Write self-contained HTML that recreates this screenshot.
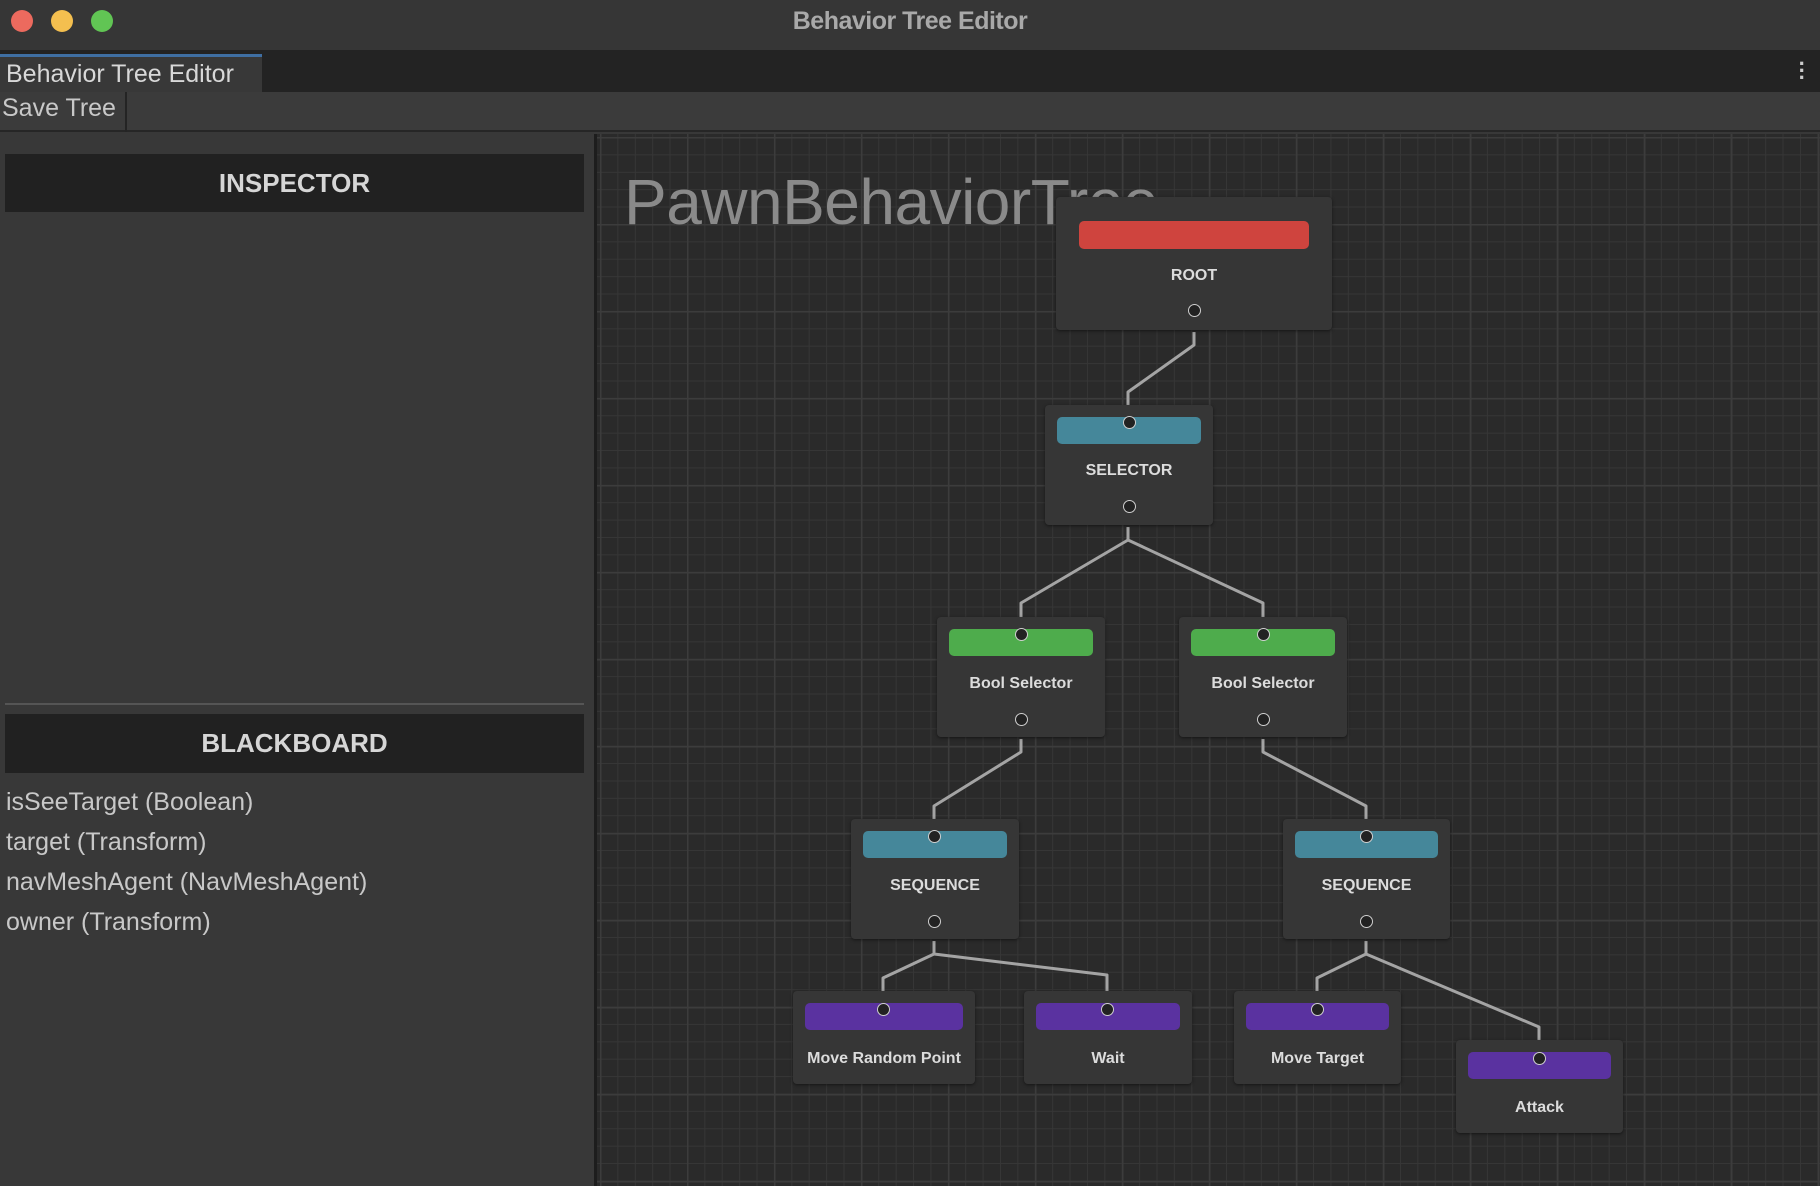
<!DOCTYPE html>
<html><head><meta charset="utf-8"><style>
*{margin:0;padding:0;box-sizing:border-box}
body{width:1820px;height:1186px;background:#383838;position:relative;overflow:hidden;font-family:"Liberation Sans",sans-serif}
.a{position:absolute}
#title{left:0;top:0;width:1820px;height:50px;background:#363636;}
#title .t{left:0;width:1820px;top:7px;text-align:center;color:#a9a9a9;font-weight:bold;font-size:25px;letter-spacing:-0.5px}
.dot{width:22px;height:22px;border-radius:50%;top:10px}
#tabs{left:0;top:50px;width:1820px;height:42px;background:#232323}
#tab{left:0;top:54px;width:262px;height:38px;background:#383838;border-top:3px solid #3f6fa3;color:#d8d8d8;font-size:25px;padding:3px 0 0 6px}
#tool{left:0;top:92px;width:1820px;height:40px;background:#3b3b3b;border-bottom:2px solid #262626}
#save{left:0;top:92px;width:127px;height:40px;border-right:2px solid #242424;color:#c8c8c8;font-size:25px;padding:2px 0 0 2px}
#left{left:0;top:134px;width:594px;height:1052px;background:#383838}
.hdr{left:5px;width:579px;background:#212121;color:#d6d6d6;font-weight:bold;font-size:26px;text-align:center}
.item{left:6px;color:#c8c8c8;font-size:25px}
#graph{left:597px;top:134px;width:1223px;height:1052px;background-color:#2a2a2a;
background-image:linear-gradient(#3c3c3c 1.5px,transparent 1.5px),linear-gradient(90deg,#3c3c3c 1.5px,transparent 1.5px),linear-gradient(#363636 1px,transparent 1px),linear-gradient(90deg,#363636 1px,transparent 1px);
background-size:87px 87px,87px 87px,17.4px 17.4px,17.4px 17.4px;background-position:3px 3px,3px 3px,3px 3px,3px 3px}
#split{left:594px;top:134px;width:3px;height:1052px;background:#1d1d1d}
.node{position:absolute;background:#363636;border-radius:4px;box-shadow:0 1px 3px rgba(0,0,0,.5)}
.bar{position:absolute;left:12px;right:12px;top:12px;height:27px;border-radius:5px}
.lbl{position:absolute;left:0;right:0;text-align:center;color:#dcdcdc;font-weight:bold;font-size:16px}
.c{position:absolute;width:13px;height:13px;border-radius:50%;background:#222;border:1.5px solid #cfcfcf;margin-left:-6.5px}
</style></head><body>
<div id="title" class="a"><div class="a dot" style="left:11px;background:#ec6a5e"></div><div class="a dot" style="left:51px;background:#f4bf4f"></div><div class="a dot" style="left:91px;background:#61c554"></div><div class="a t">Behavior Tree Editor</div></div>
<div id="tabs" class="a"><div class="a" style="right:14px;top:10px;color:#ccc;font-size:22px;line-height:7px;font-weight:bold">·<br>·<br>·</div></div>
<div id="tab" class="a">Behavior Tree Editor</div>
<div id="tool" class="a"></div>
<div id="save" class="a">Save Tree</div>
<div id="left" class="a"></div>
<div class="a hdr" style="top:154px;height:58px;line-height:58px">INSPECTOR</div>
<div class="a" style="left:5px;top:703px;width:579px;height:2px;background:#555"></div>
<div class="a hdr" style="top:714px;height:59px;line-height:59px">BLACKBOARD</div>
<div class="a item" style="top:788px">isSeeTarget (Boolean)</div>
<div class="a item" style="top:828px">target (Transform)</div>
<div class="a item" style="top:868px">navMeshAgent (NavMeshAgent)</div>
<div class="a item" style="top:908px">owner (Transform)</div>
<div id="graph" class="a"></div>
<div id="split" class="a"></div>
<div class="a" style="left:624px;top:165px;color:#8a8a8a;font-size:64px;letter-spacing:-0.5px">PawnBehaviorTree</div>
<svg class="a" style="left:0;top:0" width="1820" height="1186"><g fill="none" stroke="#a4a4a4" stroke-width="3" stroke-linejoin="round">
<path d="M1194 332V345L1128 392V405"/>
<path d="M1128 527V540L1021 603V617"/>
<path d="M1128 527V540L1263 603V617"/>
<path d="M1021 739V752L934 806V819"/>
<path d="M1263 739V752L1366 806V819"/>
<path d="M934 941V954L883 978V991"/>
<path d="M934 941V954L1107 975V991"/>
<path d="M1366 941V954L1317 978V991"/>
<path d="M1366 941V954L1539 1027V1040"/>
</g></svg>
<div class="node" style="left:1056px;top:197px;width:276px;height:133px"><div class="bar" style="left:23px;right:23px;top:24px;height:28px;background:#cf443e"></div><div class="lbl" style="top:70px">ROOT</div><div class="c" style="left:138px;top:107px"></div></div>
<div class="node" style="left:1045px;top:405px;width:168px;height:120px"><div class="bar" style="background:#45879a"></div><div class="c" style="left:84px;top:11px"></div><div class="lbl" style="top:57px">SELECTOR</div><div class="c" style="left:84px;top:95px"></div></div>
<div class="node" style="left:937px;top:617px;width:168px;height:120px"><div class="bar" style="background:#4eac4c"></div><div class="c" style="left:84px;top:11px"></div><div class="lbl" style="top:58px">Bool Selector</div><div class="c" style="left:84px;top:96px"></div></div>
<div class="node" style="left:1179px;top:617px;width:168px;height:120px"><div class="bar" style="background:#4eac4c"></div><div class="c" style="left:84px;top:11px"></div><div class="lbl" style="top:58px">Bool Selector</div><div class="c" style="left:84px;top:96px"></div></div>
<div class="node" style="left:851px;top:819px;width:168px;height:120px"><div class="bar" style="background:#45879a"></div><div class="c" style="left:83px;top:11px"></div><div class="lbl" style="top:58px">SEQUENCE</div><div class="c" style="left:83px;top:96px"></div></div>
<div class="node" style="left:1283px;top:819px;width:167px;height:120px"><div class="bar" style="background:#45879a"></div><div class="c" style="left:83px;top:11px"></div><div class="lbl" style="top:58px">SEQUENCE</div><div class="c" style="left:83px;top:96px"></div></div>
<div class="node" style="left:793px;top:991px;width:182px;height:93px"><div class="bar" style="background:#5a32a0"></div><div class="c" style="left:90px;top:12px"></div><div class="lbl" style="top:59px">Move Random Point</div></div>
<div class="node" style="left:1024px;top:991px;width:168px;height:93px"><div class="bar" style="background:#5a32a0"></div><div class="c" style="left:83px;top:12px"></div><div class="lbl" style="top:59px">Wait</div></div>
<div class="node" style="left:1234px;top:991px;width:167px;height:93px"><div class="bar" style="background:#5a32a0"></div><div class="c" style="left:83px;top:12px"></div><div class="lbl" style="top:59px">Move Target</div></div>
<div class="node" style="left:1456px;top:1040px;width:167px;height:93px"><div class="bar" style="background:#5a32a0"></div><div class="c" style="left:83px;top:12px"></div><div class="lbl" style="top:59px">Attack</div></div>
</body></html>
